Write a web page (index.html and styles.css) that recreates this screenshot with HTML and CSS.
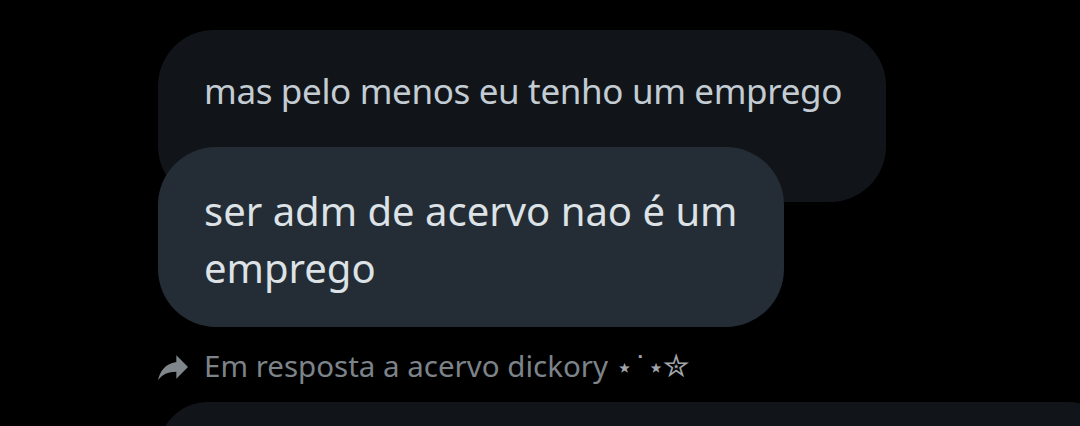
FILE: index.html
```html
<!DOCTYPE html>
<html>
<head>
<meta charset="utf-8">
<link rel="stylesheet" href="styles.css">
</head>
<body>

<div class="thread">
  <!-- quoted message, sits behind the reply -->
  <div class="quoted">mas pelo menos eu tenho um emprego</div>

  <div class="message">ser adm de acervo nao é um emprego</div>

  <div class="reply-to">
    <svg class="reply-icon" viewBox="0 0 24 24" width="40" height="40">
      <path d="M14 9V5l7 7-7 7v-4.1c-5 0-8.5 1.6-11 5.1 1-5 4-10 11-11z"/>
    </svg>
    <span>Em resposta a acervo dickory <span class="stars">⋆˙⋆<span class="big-star">✮</span></span></span>
  </div>

  <div class="next-bubble"></div>
</div>

</body>
</html>
```

FILE: styles.css
```css
* {box-sizing: border-box;}

body {
    margin: 0;
    background: #000;
    font-family: "Noto Sans", "DejaVu Sans", sans-serif;
    overflow: hidden;
    height: 426px;
}

.thread {
    padding: 30px 0 0 158px;
    width: 1080px;
    height: 426px;
    overflow: hidden;
}

.quoted {
    width: 728px;
    height: 172px;
    padding: 37px 0 0 46px;
    border-radius: 56px;
    background: #111519;
    color: #c3ccd3;
    font-size: 35px;
    letter-spacing: -0.35px;
    line-height: 48px;
    white-space: nowrap;
}

.message {
    position: relative;
    margin-top: -55px;
    width: 626px;
    height: 180px;
    padding: 35px 40px 0 46px;
    border-radius: 58px;
    background: #242d35;
    color: #dde2e6;
    font-size: 40px;
    line-height: 57px;
}

.reply-to {
    display: flex;
    align-items: center;
    gap: 11px;
    margin-top: 20px;
    margin-left: -5px;
    height: 40px;
    color: #7c8389;
    font-size: 29.5px;
    line-height: 40px;
    white-space: nowrap;
}

.reply-icon {
    fill: #7f868c;
    flex: none;
}

.stars {
    font-family: "DejaVu Sans", sans-serif;
    font-size: 28px;
    color: #a0a6ab;
}

.big-star {
    font-size: 32px;
    margin-left: -2px;
}

.next-bubble {
    margin-top: 15px;
    width: 960px;
    height: 100px;
    border-radius: 56px;
    background: #111519;
}
```
